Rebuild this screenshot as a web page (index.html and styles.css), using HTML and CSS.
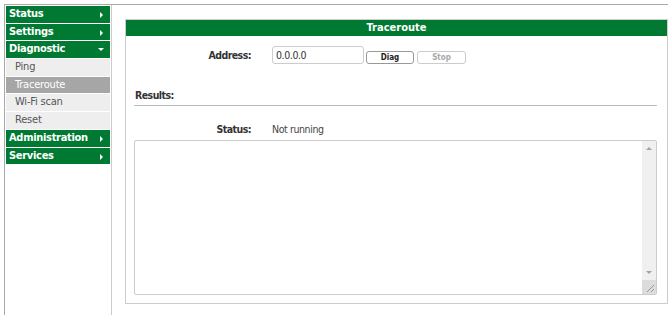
FILE: index.html
```html
<!DOCTYPE html>
<html lang="en">
<head>
  <meta charset="UTF-8" />
  <title>Traceroute</title>
  <link rel="stylesheet" href="styles.css">
</head>
<body>
  <div class="frame">
    <div class="menu">
      <div class="menuItem">Status <span class="arrow right"></span></div>
      <div class="menuItem">Settings <span class="arrow right"></span></div>
      <div class="menuItem">Diagnostic <span class="arrow down"></span></div>
      <div class="subItem">Ping</div>
      <div class="subItem active">Traceroute</div>
      <div class="subItem">Wi-Fi scan</div>
      <div class="subItem">Reset</div>
      <div class="menuItem">Administration <span class="arrow right"></span></div>
      <div class="menuItem">Services <span class="arrow right"></span></div>
    </div>

    <div class="content">
      <div class="panel">
        <div class="panelTitle">Traceroute</div>
        <div class="row addrRow">
          <label class="lbl">Address:</label>
          <input class="addr" type="text" value="0.0.0.0" />
          <button class="btn">Diag</button>
          <button class="btn disabled">Stop</button>
        </div>
        <div class="results">Results:</div>
        <div class="row statusRow">
          <span class="lbl">Status:</span>
          <span class="val">Not running</span>
        </div>
        <div class="outWrap">
          <textarea class="output"></textarea>
          <div class="scrollbar">
            <span class="sbArrow up"></span>
            <span class="sbArrow dn"></span>
            <span class="grip">
              <svg width="14" height="14" viewBox="0 0 14 14">
                <path d="M12 5 L5 12 M12 9 L9 12" stroke="#999" stroke-width="1" fill="none"/>
              </svg>
            </span>
          </div>
        </div>
      </div>
    </div>
  </div>
</body>
</html>
```

FILE: styles.css
```css
body {
  margin: 0;
  font-family: "DejaVu Sans Condensed", "DejaVu Sans", sans-serif;
  font-size: 10.5px;
  letter-spacing: -0.4px;
  color: #333;
  background: #fff;
}
.frame {
  display: flex;
  margin: 4px 3px 0 4px;
  border-top: 1px solid #aaa;
  height: 311px;
}
.menu {
  width: 104px;
  padding: 1px 1px 0 1px;
  border-left: 1px solid #aaa;
  border-right: 1px solid #ccc;
  display: flex;
  flex-direction: column;
  gap: 1px;
}
.menuItem {
  height: 16.7px;
  line-height: 16.7px;
  background: #007a33;
  color: #fff;
  font-size: 11px;
  letter-spacing: -0.3px;
  font-weight: bold;
  padding-left: 3px;
  position: relative;
}
.subItem {
  height: 16.7px;
  line-height: 16.7px;
  background: #eeeeee;
  color: #555;
  font-size: 11px;
  letter-spacing: -0.2px;
  padding-left: 9px;
}
.subItem.active {
  background: #a6a6a6;
  color: #fff;
}
.arrow {
  position: absolute;
  right: 7px;
  top: 6px;
  width: 0;
  height: 0;
}
.arrow.right {
  border-top: 3px solid transparent;
  border-bottom: 3px solid transparent;
  border-left: 3px solid #fff;
}
.arrow.down {
  top: 7px;
  right: 6px;
  border-left: 3.5px solid transparent;
  border-right: 3.5px solid transparent;
  border-top: 3px solid #fff;
}
.content {
  flex: 1;
  padding: 14px 0 0 13px;
}
.panel {
  border: 1px solid #ccc;
  height: 285px;
  box-sizing: border-box;
  padding: 0 8px 0 8px;
}
.panelTitle {
  margin: 0 -8px;
  background: #007a33;
  color: #fff;
  font-size: 11px;
  letter-spacing: 0;
  font-weight: bold;
  text-align: center;
  height: 16px;
  line-height: 15px;
}
.row {
  display: flex;
  align-items: center;
}
.lbl {
  width: 117px;
  text-align: right;
  font-weight: bold;
  letter-spacing: -0.55px;
  margin-right: 21px;
}
.addrRow {
  margin-top: 10px;
}
.addr {
  width: 92px;
  height: 18px;
  box-sizing: border-box;
  border: 1px solid #ccc;
  border-radius: 3px;
  font-family: "DejaVu Sans Condensed", "DejaVu Sans", sans-serif;
  font-size: 10.5px;
  letter-spacing: -0.4px;
  color: #333;
  padding: 0 3px;
  margin: 0;
}
.btn {
  width: 48px;
  height: 13px;
  margin: 4px 0 0 2px;
  padding: 0;
  background: #fff;
  border: 1px solid #999;
  border-radius: 3px;
  font-family: "DejaVu Sans Condensed", "DejaVu Sans", sans-serif;
  font-size: 8px;
  letter-spacing: 0;
  font-weight: bold;
  color: #222;
}
.btn.disabled {
  margin-left: 3px;
  width: 49px;
  border-color: #ccc;
  color: #aaa;
}
.results {
  margin-top: 25px;
  font-weight: bold;
  letter-spacing: -0.55px;
  padding: 0 0 4px 1px;
  border-bottom: 1px solid #bbb;
  margin-right: 2px;
}
.statusRow {
  margin-top: 17px;
}
.val {
  color: #444;
}
.outWrap {
  position: relative;
  margin-top: 5px;
  width: 523px;
  height: 155px;
}
.output {
  display: block;
  width: 100%;
  height: 100%;
  box-sizing: border-box;
  border: 1px solid #ccc;
  border-radius: 2px;
  overflow: hidden;
  resize: none;
}
.scrollbar {
  position: absolute;
  top: 1px;
  right: 1px;
  bottom: 1px;
  width: 14px;
  background: #f0f0f0;
}
.sbArrow {
  position: absolute;
  left: 4px;
  width: 0;
  height: 0;
  border-left: 3px solid transparent;
  border-right: 3px solid transparent;
}
.sbArrow.up {
  top: 6px;
  border-bottom: 3px solid #a3a3a3;
}
.sbArrow.dn {
  bottom: 20px;
  border-top: 3px solid #a3a3a3;
}
.grip {
  position: absolute;
  left: 0;
  bottom: 0;
  width: 14px;
  height: 14px;
  background: #dcdcdc;
}
.grip svg {
  display: block;
}
```
